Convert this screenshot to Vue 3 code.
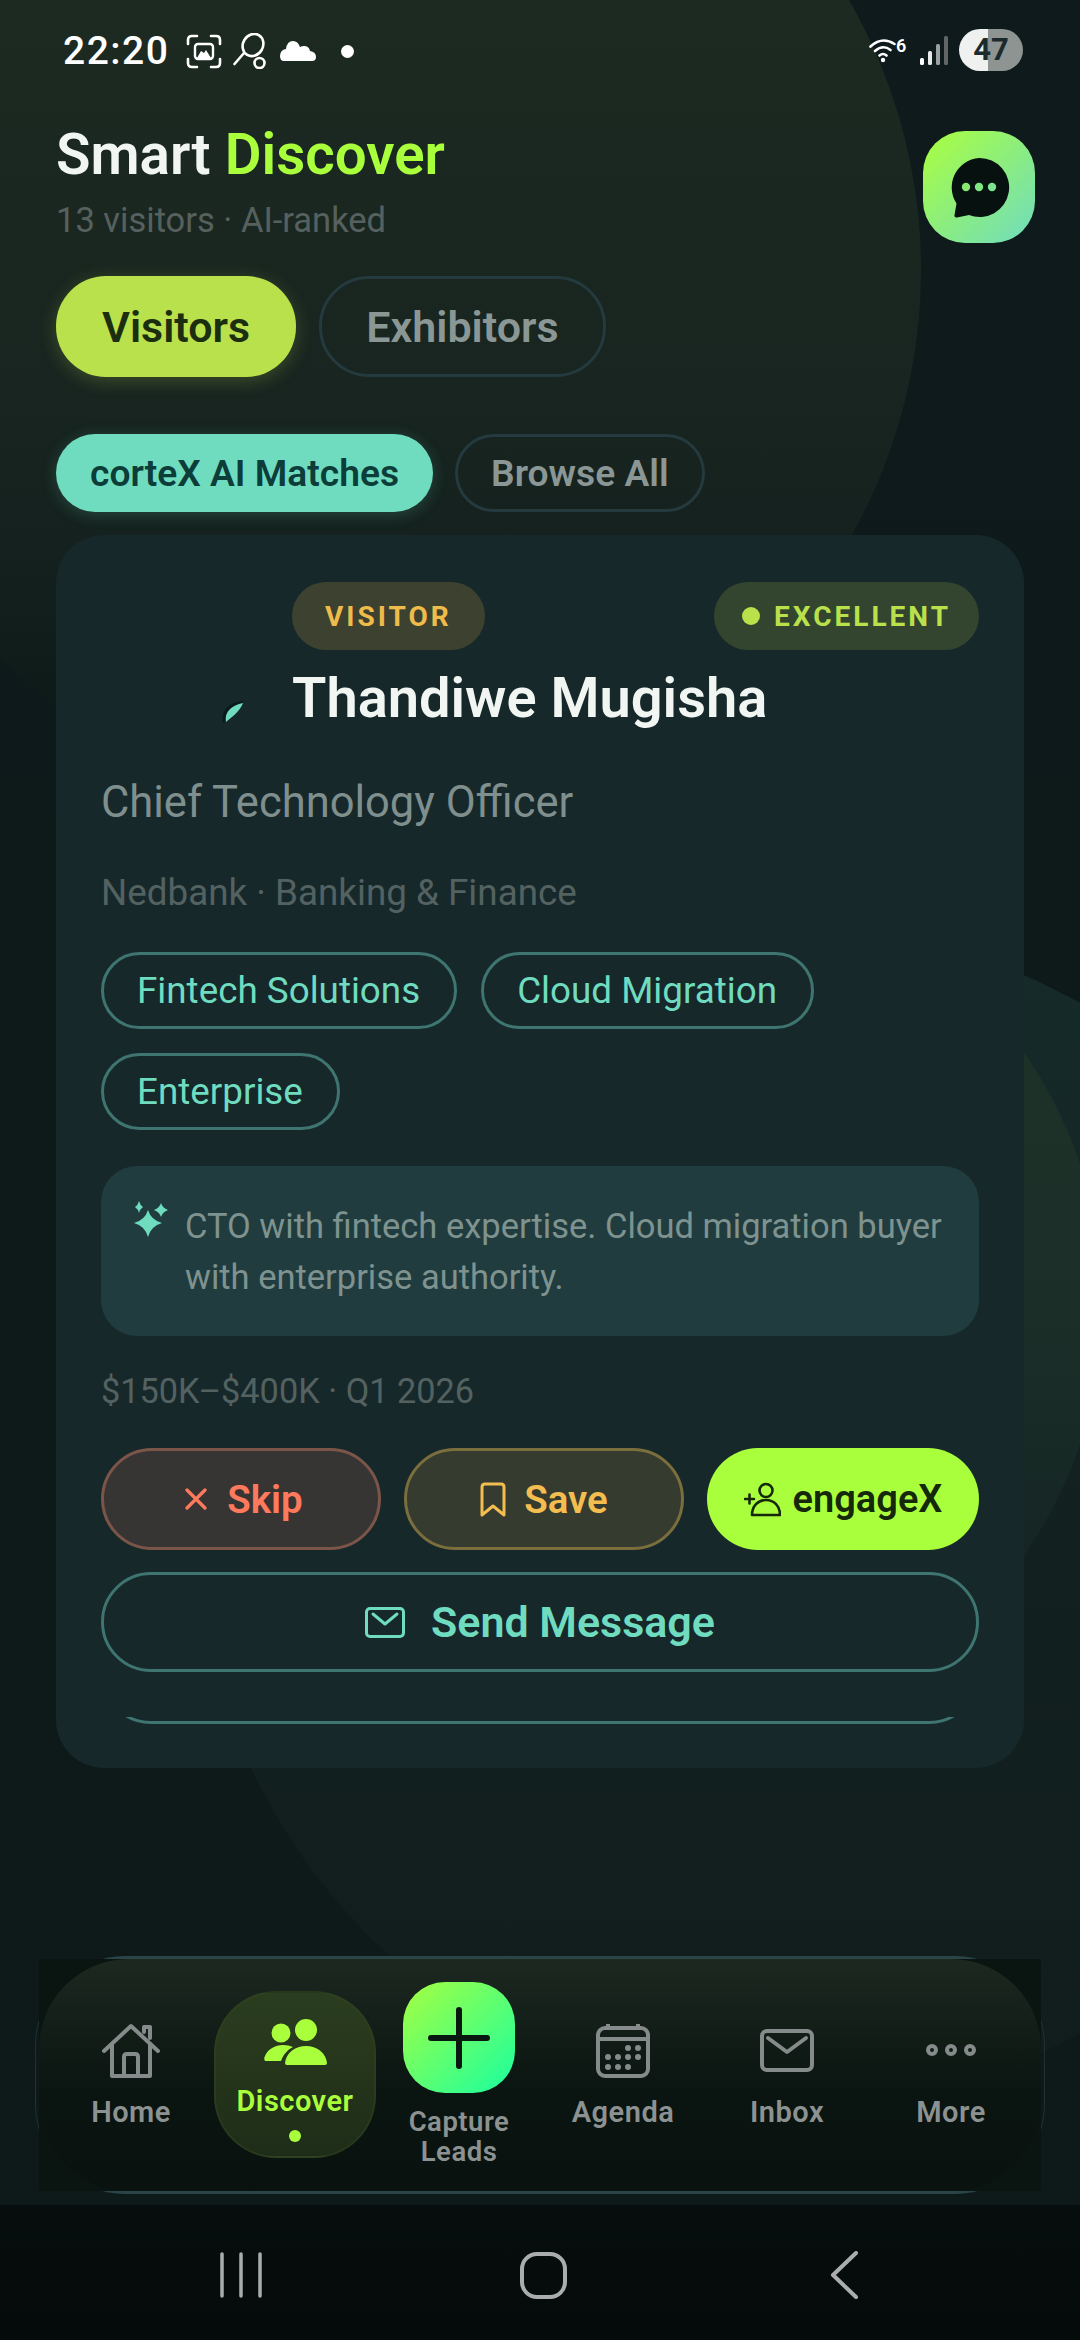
<template>
  <div class="page">
    <div class="blob blob-top"></div>
    <div class="blob blob-mid"></div>
    <div class="blob blob-inner"></div>

    <div class="status">
      <div class="status-left">
        <span class="clock">22:20</span>
        <svg class="st-scan" width="36" height="35" viewBox="0 0 36 35" fill="none" stroke="#fff" stroke-width="2.6" stroke-linecap="round">
          <path d="M2 10V6q0-4 4-4h5M25 2h5q4 0 4 4v4M34 25v4q0 4-4 4h-5M11 33H6q-4 0-4-4v-4" />
          <rect x="9" y="10" width="18" height="15" rx="3" stroke-width="2.4" />
          <path d="M11 24l4-7 3 2 2-3 5 8z" fill="#fff" stroke="none" />
        </svg>
        <svg class="st-key" width="34" height="36" viewBox="0 0 34 36" fill="none" stroke="#fff" stroke-width="2.6" stroke-linecap="round">
          <path d="M1.500 31L11 20" />
          <ellipse cx="20" cy="12" rx="10" ry="11.500" transform="rotate(30 20 12)" />
          <circle cx="26.500" cy="30" r="5" />
        </svg>
        <svg class="st-cloud" width="36" height="20" viewBox="0 0 36 20">
          <path d="M4 20h28q4 0 4-4 0-5-6-6-1-5-6-5-2 0-4 1-2-6-7-6-6 0-7 8Q0 9 0 15q0 5 4 5z" fill="#fff" />
        </svg>
        <span class="st-dot"></span>
      </div>
      <div class="status-right">
        <div class="st-wifi">
          <svg width="28" height="26" viewBox="0 0 28 26" fill="none" stroke="#fff" stroke-width="2.6" stroke-linecap="round">
            <path d="M1.500 9.500Q13-1 25.500 7M6 14q8-7 15.500-1M10.500 18.500q3.500-3 7 0" />
            <circle cx="14" cy="23" r="2.200" fill="#fff" stroke="none" />
          </svg>
          <span>6</span>
        </div>
        <svg class="st-signal" width="28" height="29" viewBox="0 0 28 29">
          <rect x="0" y="22" width="4" height="7" rx="1.500" fill="#fff" />
          <rect x="8" y="15" width="4" height="14" rx="1.500" fill="#e8eaea" />
          <rect x="16" y="8" width="4" height="21" rx="1.500" fill="#9aa09f" />
          <rect x="24" y="0" width="4" height="29" rx="1.500" fill="#5f6665" />
        </svg>
        <span class="battery">47</span>
      </div>
    </div>

    <header class="header">
      <div>
        <h1 class="title">Smart <span>Discover</span></h1>
        <p class="subtitle">13 visitors · AI-ranked</p>
      </div>
      <button class="chat-btn">
        <svg width="62" height="62" viewBox="0 0 62 62">
          <path d="M31 2a29.500 29.500 0 1 1-10 57l-12 2.500q-3 .5-2.500-2.500l2-11.500A29.500 29.500 0 0 1 31 2z" fill="#061110" />
          <circle cx="18" cy="31" r="4.200" fill="#86e86f" />
          <circle cx="31" cy="31" r="4.200" fill="#7fe680" />
          <circle cx="44" cy="31" r="4.200" fill="#7be392" />
        </svg>
      </button>
    </header>

    <div class="tabs">
      <button class="tab tab-on">Visitors</button>
      <button class="tab">Exhibitors</button>
    </div>

    <div class="subtabs">
      <button class="subtab subtab-on">corteX AI Matches</button>
      <button class="subtab">Browse All</button>
    </div>

    <section class="card">
      <div class="head">
        <svg class="avatar-bit" width="22" height="22" viewBox="0 0 22 22">
          <path d="M1 22C-1 10 6 1 22 0 15 6 7 14 2 22z" fill="#0a1a1c" />
          <path d="M4 21C2 11 10 4 21 2 18 10 10 16 4 21z" fill="#6fdcc0" />
        </svg>
        <div class="head-main">
          <div class="badges">
            <span class="badge badge-visitor">VISITOR</span>
            <span class="badge badge-score"><i></i>EXCELLENT</span>
          </div>
          <h2 class="name">Thandiwe Mugisha</h2>
        </div>
      </div>

      <p class="role">Chief Technology Officer</p>
      <p class="company">Nedbank · Banking &amp; Finance</p>

      <div class="tags">
        <span v-for="tag in tags" :key="tag" class="tag">{{ tag }}</span>
      </div>

      <div class="insight">
        <svg width="34" height="36" viewBox="0 0 34 36" fill="#6fdcc0">
          <path d="M14 9q3 10 14 13-11 3-14 14-3-11-14-14 11-3 14-13z" />
          <path d="M5 0q1 4 4 6-3 2-4 6-1-4-4-6 3-2 4-6zM27 2q1.500 5 7 7-5.500 2-7 7-1.500-5-7-7 5.500-2 7-7z" />
        </svg>
        <p>CTO with fintech expertise. Cloud migration buyer with enterprise authority.</p>
      </div>

      <p class="budget">$150K–$400K · Q1 2026</p>

      <div class="actions">
        <button class="act act-skip">
          <svg width="22" height="22" viewBox="0 0 22 22" stroke="#ff7a5c" stroke-width="3.200" stroke-linecap="round">
            <path d="M2 2l18 18M20 2L2 20" />
          </svg>
          Skip
        </button>
        <button class="act act-save">
          <svg width="26" height="35" viewBox="0 0 26 35" fill="none" stroke="#f4bd4f" stroke-width="3" stroke-linejoin="round">
            <path d="M2 5q0-3 3-3h16q3 0 3 3v28l-11-9L2 33z" />
          </svg>
          Save
        </button>
        <button class="act act-engage">
          <svg width="37" height="35" viewBox="0 0 37 35" fill="none" stroke="#16280a" stroke-width="2.600" stroke-linecap="round">
            <circle cx="22" cy="8.500" r="6.500" />
            <path d="M8 33c0-9 6-15 14-15s14 6 14 15z" stroke-linejoin="round" />
            <path d="M1 17h9M5.500 12.500v9" />
          </svg>
          engageX
        </button>
      </div>

      <button class="send">
        <svg width="40" height="31" viewBox="0 0 40 31" fill="none" stroke="#6fdcc0" stroke-width="3" stroke-linecap="round" stroke-linejoin="round">
          <rect x="1.500" y="1.500" width="37" height="28" rx="3.500" />
          <path d="M8 7l12 10L32 7" />
        </svg>
        Send Message
      </button>

      <div class="peek"><div></div></div>
    </section>

    <nav class="nav-shell">
      <div class="nav-square">
        <div class="nav-bar">
          <div class="nav-item">
            <svg class="ni" width="58" height="55" viewBox="0 0 58 55" fill="none" stroke="#858b8a" stroke-width="4" stroke-linecap="round" stroke-linejoin="round">
              <path d="M2 28L29 3l27 25" />
              <path d="M10 22v31h38V22M22 53V34q0-3 3-3h8q3 0 3 3v19M42 9V4h6v11" />
            </svg>
            <span class="nl">Home</span>
          </div>

          <div class="nav-item nav-active">
            <svg width="64" height="47" viewBox="0 0 64 47" fill="#aaff3c">
              <circle cx="18" cy="15" r="9.500" />
              <circle cx="43" cy="12" r="11" />
              <path d="M2 43C1 41 1 40 2 38 5 31 12 27 20 27q6 0 10 2c-6 3-10 8-12 14z" />
              <path d="M24 47q-2 0-2-2C23 35 32 28 43 28s20 7 21 17q0 2-2 2z" />
            </svg>
            <span class="nl">Discover</span>
            <i class="active-dot"></i>
          </div>

          <div class="nav-item nav-capture">
            <button class="capture">
              <svg width="62" height="62" viewBox="0 0 62 62" stroke="#08170f" stroke-width="6" stroke-linecap="round">
                <path d="M31 3v56M3 31h56" />
              </svg>
            </button>
            <span class="nl">Capture Leads</span>
          </div>

          <div class="nav-item">
            <svg class="ni" width="54" height="55" viewBox="0 0 54 55" fill="none" stroke="#858b8a" stroke-width="4">
              <rect x="2" y="5" width="50" height="48" rx="7" />
              <path d="M2 16h50M12 1v4M42 1v4" />
              <g fill="#858b8a" stroke="none">
                <circle cx="32" cy="25" r="3" /><circle cx="42" cy="25" r="3" />
                <circle cx="12" cy="34" r="3" /><circle cx="22" cy="34" r="3" /><circle cx="32" cy="34" r="3" /><circle cx="42" cy="34" r="3" />
                <circle cx="12" cy="44" r="3" /><circle cx="22" cy="44" r="3" /><circle cx="32" cy="44" r="3" />
              </g>
            </svg>
            <span class="nl">Agenda</span>
          </div>

          <div class="nav-item">
            <svg class="ni" width="54" height="55" viewBox="0 0 54 55" fill="none" stroke="#858b8a" stroke-width="4" stroke-linecap="round" stroke-linejoin="round">
              <rect x="2" y="8" width="50" height="39" rx="5" />
              <path d="M8 15l19 14 19-14" />
            </svg>
            <span class="nl">Inbox</span>
          </div>

          <div class="nav-item">
            <svg class="ni" width="54" height="55" viewBox="0 0 54 55" fill="none" stroke="#858b8a" stroke-width="4">
              <circle cx="8" cy="27" r="4" /><circle cx="27" cy="27" r="4" /><circle cx="46" cy="27" r="4" />
            </svg>
            <span class="nl">More</span>
          </div>
        </div>
      </div>
    </nav>

    <div class="sysnav">
      <svg width="680" height="48" viewBox="0 0 680 48" fill="none" stroke="#a9adad" stroke-linecap="round" stroke-linejoin="round">
        <path d="M2 3v42M21 3v42M40 3v42" stroke-width="3.500" />
        <rect x="302" y="3" width="43" height="43" rx="15" stroke-width="4" />
        <path d="M636 2L613 24l23 22" stroke-width="4" />
      </svg>
    </div>
  </div>
</template>

<script setup>
const tags = ['Fintech Solutions', 'Cloud Migration', 'Enterprise']
</script>

<style>
html, body { margin: 0; background: #0e1a1a; }
</style>

<style scoped>
.page {
  position: relative;
  width: 1080px;
  height: 2340px;
  overflow: hidden;
  display: flex;
  flex-direction: column;
  background: linear-gradient(180deg, #0e1a1b 0%, #0e1a19 100%);
  font-family: Roboto, "Liberation Sans", sans-serif;
}

.page > * { position: relative; }

button { font-family: inherit; cursor: pointer; }

.page > .blob {
  position: absolute;
  border-radius: 50%;
}
.blob-top {
  left: -163px;
  top: -272px;
  width: 1084px;
  height: 1084px;
  background: linear-gradient(180deg, #1e2b22 20%, #182520 60%, #14211e 76%, #0e1b19 88%);
}
.blob-mid {
  left: 196px;
  top: 926px;
  width: 1184px;
  height: 1184px;
  background: linear-gradient(180deg, #172b2b 0%, #12201f 55%, #101d1c 100%);
}
.blob-inner {
  left: 225px;
  top: 865px;
  width: 878px;
  height: 878px;
  background: linear-gradient(180deg, #1d3129 30%, #1a2c27 60%, #152624 75%);
}

.status {
  height: 126px;
  padding: 0 57px 0 63px;
  box-sizing: border-box;
  display: flex;
  justify-content: space-between;
  color: #fff;
}
.status-left {
  height: 102px;
  display: flex;
  align-items: center;
}
.clock {
  font-size: 39px;
  font-weight: 500;
  letter-spacing: 1.500px;
}
.st-scan { margin-left: 17px; }
.st-key { margin-left: 11px; }
.st-cloud { margin-left: 13px; }
.st-dot {
  width: 13px;
  height: 13px;
  margin-left: 25px;
  border-radius: 50%;
  background: #fff;
}
.status-right {
  height: 100px;
  display: flex;
  align-items: center;
  gap: 11px;
}
.st-wifi {
  width: 40px;
  height: 26px;
  display: flex;
  align-items: flex-start;
}
.st-wifi span {
  margin-left: -1px;
  font-size: 18px;
  font-weight: 600;
  line-height: 18px;
}
.battery {
  width: 64px;
  height: 42px;
  border-radius: 21px;
  background: linear-gradient(90deg, #eff1f0 45%, #8e9492 45%);
  color: #1b2a2d;
  font-size: 31px;
  font-weight: 700;
  line-height: 42px;
  text-align: center;
}

.header {
  height: 117px;
  padding: 0 45px 0 56px;
  display: flex;
  justify-content: space-between;
}
.title {
  margin: 0;
  color: #f1f6f2;
  font-size: 56.500px;
  font-weight: 600;
  line-height: 58px;
}
.title span { color: #aaff3c; }
.subtitle {
  margin: 16px 0 0;
  color: #56615f;
  font-size: 34.500px;
  line-height: 40px;
}
.chat-btn {
  width: 112px;
  height: 112px;
  margin-top: 5px;
  padding: 0;
  border: none;
  border-radius: 42px;
  background: linear-gradient(135deg, #aaff3c 0%, #6fdcc0 100%);
  display: flex;
  align-items: center;
  justify-content: center;
}

.tabs {
  margin-top: 33px;
  padding-left: 56px;
  display: flex;
  gap: 23px;
}
.tab {
  height: 101px;
  padding: 0 44px;
  border: 3px solid #243a3e;
  border-radius: 50px;
  background: transparent;
  color: #8a9795;
  font-size: 43px;
  font-weight: 600;
}
.tab-on {
  padding: 0 43px;
  border-color: transparent;
  background: #b9e14b;
  color: #1b2e0f;
  box-shadow: 0 4px 18px rgba(185, 225, 75, 0.22);
}

.subtabs {
  margin-top: 57px;
  padding-left: 56px;
  display: flex;
  gap: 22px;
}
.subtab {
  height: 78px;
  padding: 0 33px;
  border: 3px solid #243a3e;
  border-radius: 39px;
  background: transparent;
  color: #8a9795;
  font-size: 37.200px;
  font-weight: 600;
}
.subtab-on {
  padding: 0 31px;
  border-color: transparent;
  background: #6fdcc0;
  color: #0d3d38;
  box-shadow: 0 3px 16px rgba(111, 220, 192, 0.2);
}

.card {
  width: 968px;
  height: 1233px;
  margin: 23px 0 0 56px;
  padding: 47px 45px 0;
  box-sizing: border-box;
  border-radius: 48px;
  background: #17282b;
}
.head {
  display: flex;
  padding-left: 121px;
}
.avatar-bit { margin-top: 119px; flex: none; }
.head-main {
  flex: 1;
  margin-left: 48px;
}
.badges {
  display: flex;
  justify-content: space-between;
}
.badge {
  height: 68px;
  padding: 0 33px;
  border-radius: 34px;
  display: flex;
  align-items: center;
  font-size: 28px;
  font-weight: 700;
  letter-spacing: 3px;
}
.badge-visitor {
  background: #3d4230;
  color: #efbc4c;
}
.badge-score {
  padding: 0 28px;
  background: #34452f;
  color: #b9e14b;
}
.badge-score i {
  width: 18px;
  height: 18px;
  margin-right: 14px;
  border-radius: 50%;
  background: #b9e14b;
}
.name {
  margin: 15px 0 0;
  color: #f1f6f2;
  font-size: 56px;
  font-weight: 600;
  line-height: 66px;
}
.role {
  margin: 47px 0 0;
  color: #7f8f8d;
  font-size: 43.500px;
  line-height: 50px;
}
.company {
  margin: 43px 0 0;
  color: #536260;
  font-size: 36.800px;
  line-height: 44px;
}
.tags {
  margin-top: 37px;
  display: flex;
  flex-wrap: wrap;
  gap: 24px;
}
.tag {
  height: 77px;
  padding: 0 34px 0 33px;
  box-sizing: border-box;
  border: 3px solid #3f7570;
  border-radius: 39px;
  color: #6fdcc0;
  font-size: 36.800px;
  line-height: 71px;
}
.insight {
  margin-top: 36px;
  padding: 35px 36px 33px 33px;
  border-radius: 36px;
  background: #213c3e;
  display: flex;
  gap: 17px;
}
.insight svg { flex: none; }
.insight p {
  margin: 0;
  color: #7e938f;
  font-size: 34.500px;
  line-height: 51px;
}
.budget {
  margin: 35px 0 0;
  color: #536260;
  font-size: 34.300px;
  line-height: 40px;
}
.actions {
  margin-top: 37px;
  display: flex;
  gap: 23px;
}
.act {
  height: 102px;
  padding: 0;
  box-sizing: border-box;
  border: 3px solid;
  border-radius: 51px;
  display: flex;
  align-items: center;
  justify-content: center;
  gap: 20px;
  font-size: 38.500px;
  font-weight: 600;
}
.act-skip {
  width: 280px;
  padding-left: 6px;
  border-color: #7c5549;
  background: #373533;
  color: #ff7a5c;
}
.act-save {
  width: 280px;
  gap: 18px;
  border-color: #7b6e3d;
  background: #353b2f;
  color: #f4bd4f;
}
.act-engage {
  flex: 1;
  gap: 12px;
  border: none;
  background: #aaff3c;
  color: #16280a;
  font-size: 38px;
}
.send {
  width: 100%;
  height: 100px;
  margin-top: 22px;
  border: 3px solid #3f7570;
  border-radius: 50px;
  background: transparent;
  color: #6fdcc0;
  font-size: 43px;
  font-weight: 600;
  display: flex;
  align-items: center;
  justify-content: center;
  gap: 26px;
}
.peek {
  height: 7px;
  margin: 45px 0 0;
  overflow: hidden;
  position: relative;
}
.peek div {
  position: absolute;
  left: 0;
  right: 0;
  bottom: 0;
  height: 100px;
  box-sizing: border-box;
  border: 3px solid #3f7570;
  border-radius: 50px;
}

.nav-shell {
  width: 1010px;
  height: 238px;
  margin: auto 0 11px 35px;
  box-sizing: border-box;
  border-radius: 90px;
  border: 1px solid #1e3135;
  border-top: 3px solid #2a4448;
  border-bottom: 3px solid #2a4448;
  padding: 0 3px;
}
.nav-square {
  height: 100%;
  background: #0a1410;
}
.nav-bar {
  height: 100%;
  padding-left: 10px;
  box-sizing: border-box;
  border-radius: 90px;
  background: linear-gradient(180deg, #1c2820 0%, #111c17 35%, #0a1410 58%, #09120f 100%);
  display: flex;
  align-items: flex-start;
}
.nav-item {
  width: 164px;
  padding-top: 64px;
  display: flex;
  flex-direction: column;
  align-items: center;
  color: #8c9291;
}
.ni { display: block; }
.nl {
  margin-top: 19px;
  font-size: 29px;
  font-weight: 600;
  line-height: 30px;
  letter-spacing: 0.5px;
  text-align: center;
}
.nav-active {
  width: 162px;
  height: 167px;
  margin: 32px 1px 0;
  padding-top: 25px;
  box-sizing: border-box;
  border: 2px solid #34462178;
  border-radius: 62px;
  background: linear-gradient(180deg, #2b3d1f 0%, #1e2d18 100%);
  color: #aaff3c;
}
.nav-active .nl { margin-top: 21px; }
.active-dot {
  width: 12px;
  height: 12px;
  margin-top: 14px;
  border-radius: 50%;
  background: #aaff3c;
}
.nav-capture { padding-top: 23px; }
.nav-capture .nl { margin-top: 14px; width: 130px; font-size: 27.500px; }
.capture {
  width: 112px;
  height: 111px;
  padding: 0;
  border: none;
  border-radius: 42px;
  background: linear-gradient(135deg, #a6ff40 0%, #19ffa0 100%);
  display: flex;
  align-items: center;
  justify-content: center;
}

.sysnav {
  height: 135px;
  padding-top: 46px;
  padding-left: 220px;
  box-sizing: border-box;
  background: linear-gradient(180deg, #060d0d 0%, #050b0b 100%);
}
.sysnav svg { display: block; }
</style>
